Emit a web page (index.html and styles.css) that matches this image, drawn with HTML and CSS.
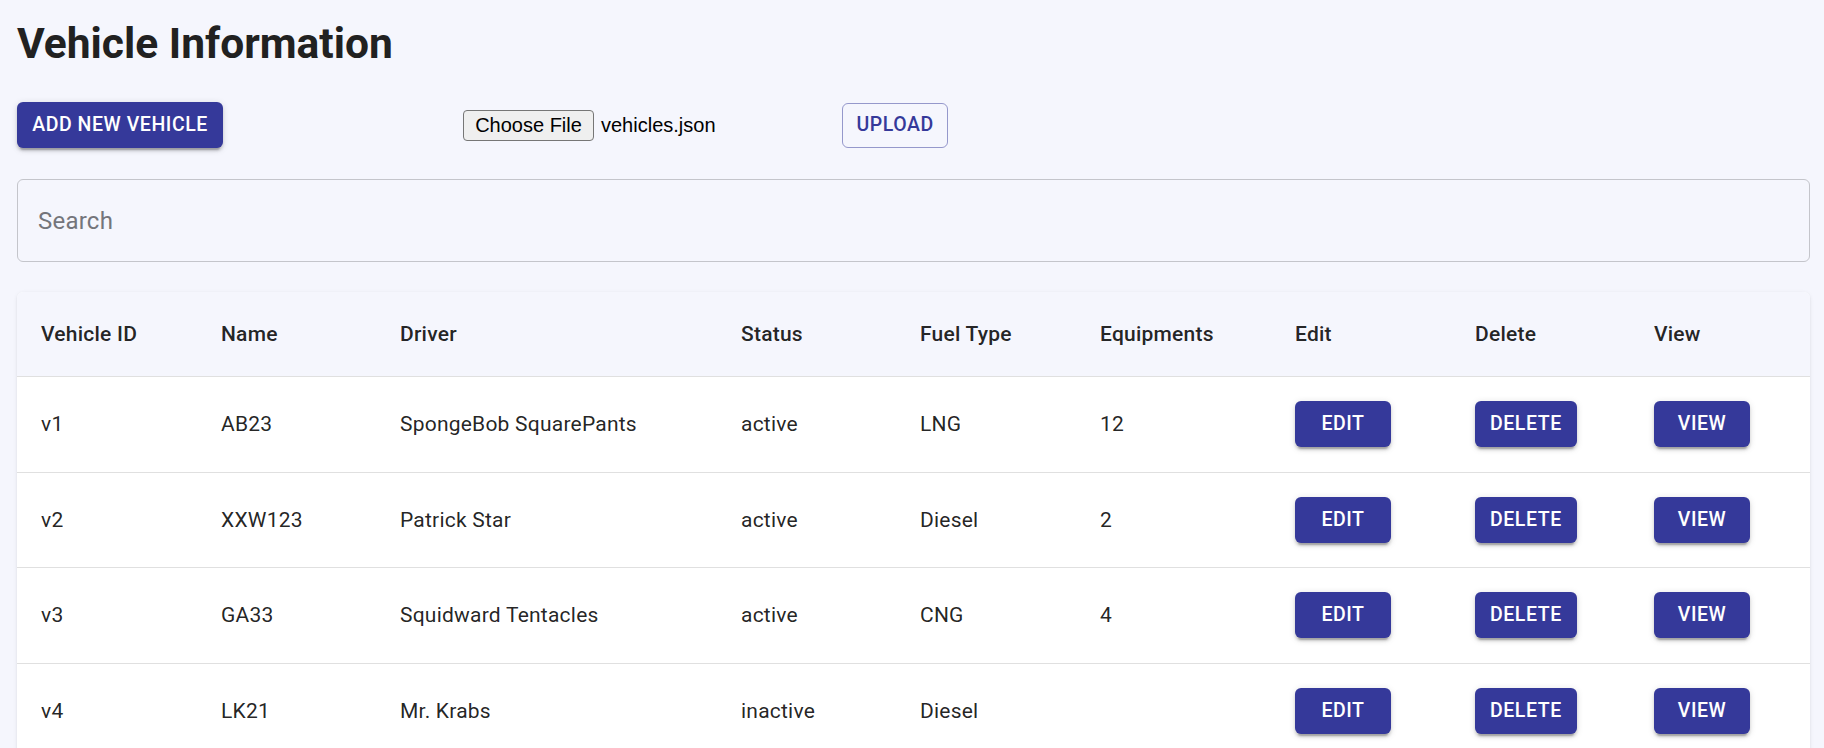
FILE: index.html
```html
<!DOCTYPE html>
<html lang="en">
<head>
<meta charset="utf-8">
<title>Vehicle Information</title>
<link rel="stylesheet" href="styles.css">
</head>
<body>
<main class="page">
  <h1 class="title">Vehicle Information</h1>

  <div class="toolbar">
    <button class="btn btn-contained btn-add">Add New Vehicle</button>
    <div class="file-picker">
      <span class="file-button">Choose File</span>
      <span class="file-name">vehicles.json</span>
    </div>
    <button class="btn btn-outlined">Upload</button>
  </div>

  <div class="search">
    <input class="search-input" type="text" placeholder="Search">
  </div>

  <div class="table-paper">
    <table class="vehicles">
      <colgroup>
        <col class="c180"><col class="c179"><col class="c341"><col class="c179"><col class="c180"><col class="c195"><col class="c180"><col class="c179"><col>
      </colgroup>
      <thead>
        <tr>
          <th>Vehicle ID</th><th>Name</th><th>Driver</th><th>Status</th><th>Fuel Type</th><th>Equipments</th><th>Edit</th><th>Delete</th><th>View</th>
        </tr>
      </thead>
      <tbody>
        <tr>
          <td>v1</td><td>AB23</td><td>SpongeBob SquarePants</td><td>active</td><td>LNG</td><td>12</td>
          <td><button class="btn btn-contained btn-small">Edit</button></td>
          <td><button class="btn btn-contained btn-small">Delete</button></td>
          <td><button class="btn btn-contained btn-small">View</button></td>
        </tr>
        <tr>
          <td>v2</td><td>XXW123</td><td>Patrick Star</td><td>active</td><td>Diesel</td><td>2</td>
          <td><button class="btn btn-contained btn-small">Edit</button></td>
          <td><button class="btn btn-contained btn-small">Delete</button></td>
          <td><button class="btn btn-contained btn-small">View</button></td>
        </tr>
        <tr>
          <td>v3</td><td>GA33</td><td>Squidward Tentacles</td><td>active</td><td>CNG</td><td>4</td>
          <td><button class="btn btn-contained btn-small">Edit</button></td>
          <td><button class="btn btn-contained btn-small">Delete</button></td>
          <td><button class="btn btn-contained btn-small">View</button></td>
        </tr>
        <tr>
          <td>v4</td><td>LK21</td><td>Mr. Krabs</td><td>inactive</td><td>Diesel</td><td></td>
          <td><button class="btn btn-contained btn-small">Edit</button></td>
          <td><button class="btn btn-contained btn-small">Delete</button></td>
          <td><button class="btn btn-contained btn-small">View</button></td>
        </tr>
      </tbody>
    </table>
  </div>
</main>
</body>
</html>
```

FILE: styles.css
```css
* { box-sizing: border-box; }

html, body {
  margin: 0;
  padding: 0;
  background: #f5f6fd;
}

body {
  font-family: Roboto, "Liberation Sans", Arial, sans-serif;
  color: rgba(0, 0, 0, 0.87);
}

.page {
  padding: 18px 14px 24px 17px;
}

.title {
  margin: 0;
  font-size: 42.5px;
  font-weight: 700;
  line-height: 52px;
  color: #212121;
  letter-spacing: 0;
}

.toolbar {
  display: flex;
  align-items: center;
  margin-top: 32px;
  height: 46px;
}

.btn {
  font-family: Roboto, "Liberation Sans", Arial, sans-serif;
  font-weight: 500;
  font-size: 19.5px;
  line-height: 34px;
  letter-spacing: 0.02857em;
  text-transform: uppercase;
  border-radius: 6px;
  cursor: pointer;
  white-space: nowrap;
}

.btn-contained {
  background: #35399a;
  color: #ffffff;
  border: 0;
  padding: 6px 15px;
  box-shadow: 0 4.5px 1.5px -3px rgba(0,0,0,0.2), 0 3px 3px 0 rgba(0,0,0,0.14), 0 1.5px 7.5px 0 rgba(0,0,0,0.12);
}

.btn-add {
  height: 46px;
  width: 206px;
  padding: 6px 0;
}

.btn-outlined {
  background: transparent;
  color: #35399a;
  border: 1.5px solid rgba(53, 57, 154, 0.5);
  padding: 4.5px 13.5px;
  height: 45px;
  width: 106px;
}

.file-picker {
  display: flex;
  align-items: center;
  width: 379px;
  margin-left: 240px;
  font-family: "Liberation Sans", Arial, sans-serif;
  font-size: 20px;
  color: #000;
}

.file-button {
  display: inline-flex;
  align-items: center;
  justify-content: center;
  height: 31px;
  width: 131px;
  background: #efefef;
  border: 1.5px solid #767676;
  border-radius: 4px;
}

.file-name {
  margin-left: 7px;
}

.search {
  margin-top: 31px;
  height: 83px;
  border: 1.5px solid #c4c5cb;
  border-radius: 6px;
  display: flex;
  align-items: center;
}

.search-input {
  width: 100%;
  border: 0;
  outline: none;
  background: transparent;
  padding: 0 20px;
  font-family: Roboto, "Liberation Sans", Arial, sans-serif;
  font-size: 24px;
  letter-spacing: 0.00938em;
  color: rgba(0,0,0,0.87);
}

.search-input::placeholder {
  color: #74757b;
  opacity: 1;
}

.table-paper {
  margin-top: 30px;
  background: #ffffff;
  border-radius: 6px;
  overflow: hidden;
  box-shadow: 0 3px 1.5px -1.5px rgba(0,0,0,0.12), 0 1.5px 1.5px 0 rgba(0,0,0,0.08), 0 1.5px 4.5px 0 rgba(0,0,0,0.08);
}

.vehicles {
  width: 100%;
  border-collapse: collapse;
  table-layout: fixed;
}

.c180 { width: 180px; }
.c179 { width: 179px; }
.c341 { width: 341px; }
.c195 { width: 195px; }

.vehicles th,
.vehicles td {
  text-align: left;
  padding: 24px;
  font-size: 21px;
  letter-spacing: 0.01071em;
  border-bottom: 1.5px solid #e0e0e0;
  vertical-align: middle;
  white-space: nowrap;
}

.vehicles thead th {
  background: #f5f6fd;
  font-weight: 500;
  line-height: 36px;
  height: 84px;
}

.vehicles tbody td {
  font-weight: 400;
  line-height: 30px;
  height: 95.5px;
}

.btn-small {
  min-width: 96px;
  height: 46px;
  padding: 6px 15px;
}
```
